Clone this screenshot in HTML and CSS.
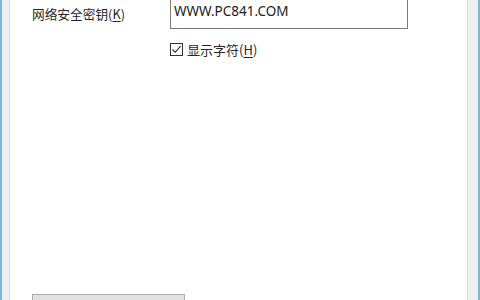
FILE: index.html
```html
<!DOCTYPE html>
<html lang="zh-CN">
<head>
<meta charset="utf-8">
<link rel="stylesheet" href="styles.css">
</head>
<body>
<div class="window">
  <div class="edge edge-left"></div>
  <div class="frame frame-left"></div>
  <div class="panel">
    <div class="form-row">
      <div class="label">网络安全密钥(<u>K</u>)</div>
      <div class="textbox">WWW.PC841.COM</div>
    </div>
    <div class="check-row">
      <span class="checkbox">
        <svg width="11" height="11" viewBox="0 0 11 11"><path d="M1.5 5.5 L4.2 8.3 L9.6 2.2" fill="none" stroke="#222" stroke-width="1.1"/></svg>
      </span>
      <span class="check-label">显示字符(<u>H</u>)</span>
    </div>
    <div class="button-row">
      <div class="button"></div>
    </div>
  </div>
  <div class="frame frame-right"></div>
  <div class="edge edge-right"></div>
</div>
</body>
</html>
```
FILE: styles.css
```css
html, body {
  margin: 0;
  padding: 0;
  background: #ffffff;
}
.window {
  display: flex;
  width: 480px;
  height: 300px;
  overflow: hidden;
  font-family: "Noto Sans", "Noto Sans CJK SC", sans-serif;
  color: #262626;
}
.edge {
  flex: none;
  width: 2px;
  background: #7ab6d8;
}
.frame {
  flex: none;
  background: #efefef;
}
.frame-left {
  width: 7px;
  border-right: 1px solid #dadada;
}
.frame-right {
  width: 10px;
  border-left: 1px solid #dadada;
}
.panel {
  flex: 1;
  min-width: 0;
  background: #ffffff;
  overflow: hidden;
}
.form-row {
  display: grid;
  grid-template-columns: 138px 238px;
  align-items: center;
  margin-top: -6px;
  padding-left: 22px;
}
.label {
  font-size: 12.7px;
  font-family: "Noto Sans CJK SC", sans-serif;
  padding-top: 4px;
  white-space: nowrap;
}
.label u, .check-label u {
  text-decoration-thickness: 1px;
  text-underline-offset: 2px;
}
.textbox {
  box-sizing: border-box;
  width: 238px;
  height: 35px;
  border: 1px solid #7a7a7a;
  padding: 8px 0 0 3px;
  font-size: 13.5px;
  line-height: 16px;
  color: #222;
}
.check-row {
  display: flex;
  align-items: center;
  margin-top: 13px;
  padding-left: 160px;
  height: 14px;
}
.checkbox {
  flex: none;
  width: 11px;
  height: 11px;
  border: 1px solid #333;
  display: inline-flex;
  background: #fff;
}
.check-label {
  margin-left: 4px;
  font-size: 13px;
  font-family: "Noto Sans CJK SC", sans-serif;
  white-space: nowrap;
}
.button-row {
  margin-top: 238px;
  padding-left: 22px;
}
.button {
  width: 151px;
  height: 22px;
  border: 1px solid #adadad;
  background: #e1e1e1;
}
```
